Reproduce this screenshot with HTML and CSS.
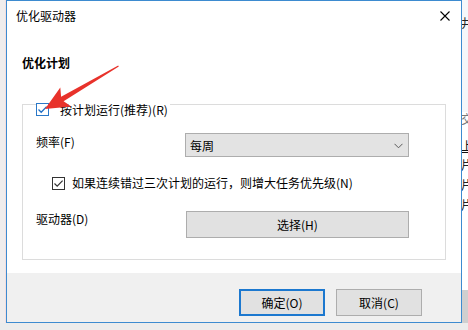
FILE: index.html
```html
<!DOCTYPE html>
<html lang="zh-CN">
<head>
<meta charset="utf-8">
<title>优化驱动器</title>
<link rel="stylesheet" href="styles.css">
</head>
<body>
<div class="desk">
  <div class="left-strip"></div>
  <div class="dialog">
    <div class="titlebar">
      <span class="title">优化驱动器</span>
      <svg class="close" width="10" height="10" viewBox="0 0 10 10"><path d="M0.5 0.5L9.5 9.5M9.5 0.5L0.5 9.5" stroke="#000" stroke-width="1.1" fill="none"/></svg>
    </div>
    <div class="body">
      <div class="heading">优化计划</div>
      <div class="group">
        <div class="row legend">
          <span class="check blue"><svg width="11" height="11" viewBox="0 0 11 11"><path d="M1.5 5.5L4.2 8.2L9.6 2.6" stroke="#1f6fc4" stroke-width="1.3" fill="none"/></svg></span>
          <span class="label">按计划运行(推荐)(R)</span>
        </div>
        <div class="row field">
          <span class="field-label">频率(F)</span>
          <div class="combo">
            <span>每周</span>
            <svg width="9" height="6" viewBox="0 0 9 6"><path d="M0.5 0.8L4.5 4.8L8.5 0.8" stroke="#5a5a5a" stroke-width="1" fill="none"/></svg>
          </div>
        </div>
        <div class="row sub">
          <span class="check"><svg width="11" height="11" viewBox="0 0 11 11"><path d="M1.5 5.5L4.2 8.2L9.6 2.6" stroke="#333" stroke-width="1.2" fill="none"/></svg></span>
          <span class="label">如果连续错过三次计划的运行，则增大任务优先级(N)</span>
        </div>
        <div class="row field drive">
          <span class="field-label">驱动器(D)</span>
          <div class="button wide">选择(H)</div>
        </div>
      </div>
    </div>
    <div class="footer">
      <div class="button primary">确定(O)</div>
      <div class="button">取消(C)</div>
    </div>
  </div>
  <div class="right-strip">
    <div class="bg-top"><span class="bg-char top-char">井</span></div>
    <div class="bg-panel">
      <span class="bg-char faint">交</span>
      <span class="bg-char link">上</span>
      <span class="bg-char">片</span>
      <span class="bg-char">片</span>
      <span class="bg-char">片</span>
    </div>
    <div class="bg-bottom"></div>
  </div>
</div>
<svg class="arrow" width="130" height="120" viewBox="0 0 130 120">
  <polygon points="45,109 60.3,87.5 61.1,96.8 118.2,65.5 118.8,66.5 63.6,101.2 71.3,106.5" fill="#e8322b"/>
</svg>
</body>
</html>
```

FILE: styles.css
```css
* { box-sizing: border-box; }

html, body {
  margin: 0;
  padding: 0;
}

body {
  width: 468px;
  height: 330px;
  overflow: hidden;
  background: #ececec;
  font-family: "Noto Sans CJK SC", "Noto Sans", sans-serif;
  font-size: 12px;
  line-height: 16px;
  color: #000;
  position: relative;
}

.desk {
  display: flex;
  height: 323px;
}

.left-strip {
  width: 6px;
  background: #f0eded;
  border-right: 1px solid #f4dede;
}

.dialog {
  width: 456px;
  height: 323px;
  border: 1px solid #3d8bd0;
  background: #fff;
  display: flex;
  flex-direction: column;
}

.titlebar {
  height: 29px;
  display: flex;
  align-items: center;
  justify-content: space-between;
  padding: 0 11px 0 9px;
}

.title {
  line-height: 16px;
}

.close {
  display: block;
}

.body {
  padding-left: 15px;
}

.heading {
  margin-top: 25px;
  font-weight: bold;
  line-height: 16px;
}

.group {
  margin-top: 33px;
  width: 424px;
  height: 156px;
  border: 1px solid #dcdcdc;
  padding-left: 13px;
}

.row {
  display: flex;
}

.legend {
  margin-top: -2px;
  height: 13px;
  align-items: center;
}

.legend .label {
  margin-left: 11px;
  background: #fff;
  padding-right: 2px;
}

.check {
  width: 13px;
  height: 13px;
  border: 1px solid #333;
  background: #fff;
  display: flex;
  align-items: center;
  justify-content: center;
  flex: none;
}

.check.blue {
  border-color: #2a78c8;
}

.check svg {
  display: block;
}

.field {
  margin-top: 17px;
  align-items: flex-start;
}

.field-label {
  width: 149px;
  margin-top: 1px;
}

.combo {
  width: 224px;
  height: 24px;
  background: #e3e3e3;
  border: 1px solid #adadad;
  display: flex;
  align-items: center;
  justify-content: space-between;
  padding: 2px 5px 0 4px;
}

.combo svg {
  display: block;
  margin-top: -1px;
}

.sub {
  margin-top: 20px;
  padding-left: 16px;
  height: 13px;
  align-items: center;
}

.sub .label {
  margin-left: 7px;
  margin-top: -1px;
}

.drive {
  margin-top: 21px;
}

.drive .field-label {
  width: 150px;
  margin-top: 0;
}

.button {
  height: 27px;
  width: 86px;
  background: #e1e1e1;
  border: 1px solid #adadad;
  display: flex;
  align-items: center;
  justify-content: center;
}

.button.wide {
  width: 223px;
}

.button.primary {
  border: 2px solid #1c78cf;
}

.footer {
  margin-top: auto;
  height: 49px;
  background: #f0f0f0;
  display: flex;
  justify-content: flex-end;
  gap: 11px;
  padding: 16px 39px 0 0;
}

.right-strip {
  flex: 1;
  display: flex;
  flex-direction: column;
  overflow: hidden;
  background: #fff;
}

.bg-top {
  height: 112px;
  background: #f5f7fa;
  padding-top: 13px;
}

.bg-panel {
  height: 178px;
  background: #fff;
  display: flex;
  flex-direction: column;
}

.bg-bottom {
  flex: 1;
  background: #cfcfcf;
}

.bg-char {
  display: block;
  width: 12px;
  height: 20px;
  line-height: 20px;
  margin-left: -1px;
  color: #222;
}

.bg-char.faint {
  color: #777;
  height: 16px;
  line-height: 16px;
  margin-top: -1px;
}

.bg-char.link {
  text-decoration: underline;
  color: #111;
  height: 19px;
  margin-top: 9px;
}

.arrow {
  position: absolute;
  left: 0;
  top: 0;
}
```
